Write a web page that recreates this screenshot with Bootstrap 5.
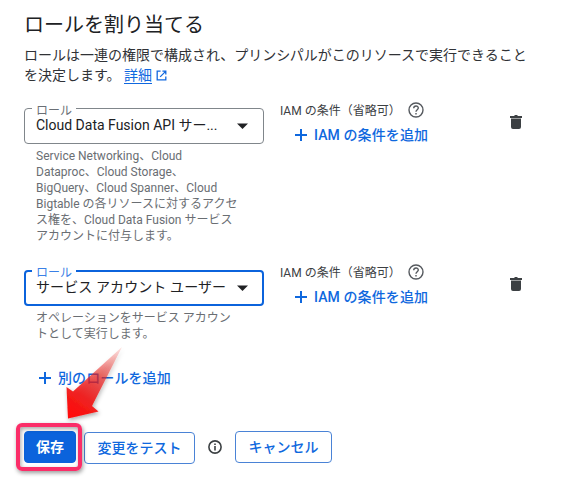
<!DOCTYPE html>
<html lang="ja">
<head>
<meta charset="utf-8">
<meta name="viewport" content="width=device-width, initial-scale=1">
<title>ロールを割り当てる</title>
<link href="https://cdn.jsdelivr.net/npm/bootstrap@5.3.0/dist/css/bootstrap.min.css" rel="stylesheet">
<style>
body{font-family:Roboto,"Noto Sans CJK JP",sans-serif;font-size:14px;line-height:20px;color:#202124;background:#fff;height:488px;overflow:hidden}
svg{display:block;flex:none}
.panel{padding:12px 46px 0 24px}
.page-title{font-size:20px;line-height:26px;font-weight:400;margin:0 0 7px}
.intro{color:#303236;width:506px;margin:0 0 23px}
.more{color:#1068df;text-decoration:none;border-bottom:1px solid #1068df}
.open-mark{display:inline-block;vertical-align:-1px}
.role{height:162px}
.role.second{height:161px}
.role-main{width:240px}
.field{position:relative;height:36px;border:1px solid #80868b;border-radius:4px;padding:0 10px 2px 11px;color:#202124}
.field.active{border:2px solid #0b63dc;padding:0 9px 2px 10px;letter-spacing:.1px}
.field .float-name{position:absolute;left:7px;top:-4px;background:#fff;padding:0 4px;font-size:12px;line-height:12px;letter-spacing:0;color:#6a6f75}
.field.active .float-name{left:6px;top:-5px;color:#3a80e6}
.help{font-size:12px;line-height:16px;color:#6a6e73;padding:4px 0 0 12px;margin:0;white-space:nowrap}
.cond{width:229px;margin-left:16px;margin-top:-6px}
.cond-name{font-size:12px;line-height:18px;height:16px;color:#3c4043;gap:7px}
.add{color:#0f68de;font-weight:500;border:0;background:none;padding:0;line-height:20px;letter-spacing:.1px}
.cond .add{margin:7px 0 0 15px;gap:7px}
.add.another{height:20px;margin:26px 0 0 15px;gap:7px}
.trash{margin-top:7px}
.actions{height:34px}
.act{height:32px;border-radius:4px;font-size:14px;line-height:20px;font-weight:500;padding:0;border:1px solid #4a83d6;color:#0f68de;background:#fff}
.save{display:block;width:52px;background:#0b63dc;color:#fff;border-color:#0b63dc;font-weight:700}
.test{width:111px;margin:1px 0 0 8px}
.cancel{width:97px}
.info{margin:9px 13px 0}
.ring{position:absolute;left:-8px;top:-8px;width:66px;height:48px;border:4px solid #fb2d68;border-radius:6px;box-shadow:1px 2px 4px rgba(0,0,0,.4),inset 1px 2px 4px rgba(0,0,0,.35);pointer-events:none}
.pointer{position:absolute;left:50px;top:335px;pointer-events:none}
</style>
</head>
<body>
<main class="panel position-relative">
<h1 class="page-title">ロールを割り当てる</h1>
<p class="intro">ロールは一連の権限で構成され、プリンシパルがこのリソースで実行できることを決定します。 <a class="more" href="#">詳細</a> <svg class="open-mark" width="11" height="11" viewBox="0 0 12 12" fill="none" stroke="#1068df" stroke-width="1.4"><path d="M5 1.300H1.300v9.400h9.400V7M7 1.300h3.700V5M10.500 1.500l-6 6"/></svg></p>

<section class="role d-flex">
 <div class="role-main">
  <div class="field d-flex align-items-center justify-content-between"><span class="float-name">ロール</span><span class="value">Cloud Data Fusion API サー...</span><svg width="20" height="10" viewBox="0 0 20 10"><path d="M4 3.500h11L9.500 9z" fill="#202124"/></svg></div>
  <p class="help">Service Networking、Cloud<br>Dataproc、Cloud Storage、<br>BigQuery、Cloud Spanner、Cloud<br>Bigtable の各リソースに対するアクセ<br>ス権を、Cloud Data Fusion サービス<br>アカウントに付与します。</p>
 </div>
 <div class="cond">
  <div class="cond-name d-flex align-items-start"><span>IAM の条件（省略可）</span><svg width="16" height="16" viewBox="0 0 16 16" fill="none" stroke="#55595e" stroke-width="1.4"><circle cx="8" cy="8" r="7"/><path d="M5.700 6.300C5.800 3.300 10.300 3.300 10.300 6.100 10.300 7.700 8 7.900 8 9.800M8 11v1.500"/></svg></div>
  <button class="add d-flex align-items-center" type="button"><svg width="12" height="12" viewBox="0 0 12 12"><path d="M5 0h2v5h5v2H7v5H5V7H0V5h5z" fill="#0f68de"/></svg><span>IAM の条件を追加</span></button>
 </div>
 <svg class="trash" width="14" height="14" viewBox="0 0 14 14" fill="#3c4043"><path d="M1 1h4l1-1h2l1 1h4v2H1zM2 3.500h10V12q0 2-2 2H4q-2 0-2-2z"/></svg>
</section>

<section class="role second d-flex">
 <div class="role-main">
  <div class="field active d-flex align-items-center justify-content-between"><span class="float-name">ロール</span><span class="value">サービス アカウント ユーザー</span><svg width="20" height="10" viewBox="0 0 20 10"><path d="M4 3.500h11L9.500 9z" fill="#202124"/></svg></div>
  <p class="help">オペレーションをサービス アカウン<br>トとして実行します。</p>
  <button class="add another d-flex align-items-center" type="button"><svg width="12" height="12" viewBox="0 0 12 12"><path d="M5 0h2v5h5v2H7v5H5V7H0V5h5z" fill="#0f68de"/></svg><span>別のロールを追加</span></button>
 </div>
 <div class="cond">
  <div class="cond-name d-flex align-items-start"><span>IAM の条件（省略可）</span><svg width="16" height="16" viewBox="0 0 16 16" fill="none" stroke="#55595e" stroke-width="1.4"><circle cx="8" cy="8" r="7"/><path d="M5.700 6.300C5.800 3.300 10.300 3.300 10.300 6.100 10.300 7.700 8 7.900 8 9.800M8 11v1.500"/></svg></div>
  <button class="add d-flex align-items-center" type="button"><svg width="12" height="12" viewBox="0 0 12 12"><path d="M5 0h2v5h5v2H7v5H5V7H0V5h5z" fill="#0f68de"/></svg><span>IAM の条件を追加</span></button>
 </div>
 <svg class="trash" width="14" height="14" viewBox="0 0 14 14" fill="#3c4043"><path d="M1 1h4l1-1h2l1 1h4v2H1zM2 3.500h10V12q0 2-2 2H4q-2 0-2-2z"/></svg>
</section>

<div class="actions d-flex align-items-start">
 <div class="position-relative"><button class="act save" type="button">保存</button><span class="ring"></span></div>
 <button class="act test" type="button">変更をテスト</button>
 <svg class="info" width="14" height="14" viewBox="0 0 14 14" fill="none" stroke="#3c4043" stroke-width="1.600"><circle cx="7" cy="7" r="6.100"/><path d="M7 6v4.500M7 3.400v1.600"/></svg>
 <button class="act cancel" type="button">キャンセル</button>
</div>
<svg class="pointer" width="85" height="95" viewBox="50 335 85 95">
 <defs><linearGradient id="fade" gradientUnits="userSpaceOnUse" x1="122" y1="347" x2="74" y2="416"><stop offset="0" stop-color="#f04a42" stop-opacity=".15"/><stop offset=".45" stop-color="#e8201c" stop-opacity=".65"/><stop offset=".75" stop-color="#f01816" stop-opacity=".93"/><stop offset="1" stop-color="#ff0a0a"/></linearGradient>
 <filter id="soft" x="-20%" y="-20%" width="150%" height="150%"><feDropShadow dx="1" dy="2" stdDeviation="2" flood-color="#000" flood-opacity=".35"/></filter></defs>
 <path filter="url(#soft)" fill="url(#fade)" d="M122 347 92 406l6.500 5.500L68 418.500 66.500 387l6.500 4.500z"/>
</svg>
</main>
<script src="https://cdn.jsdelivr.net/npm/bootstrap@5.3.0/dist/js/bootstrap.bundle.min.js"></script>
</body>
</html>
